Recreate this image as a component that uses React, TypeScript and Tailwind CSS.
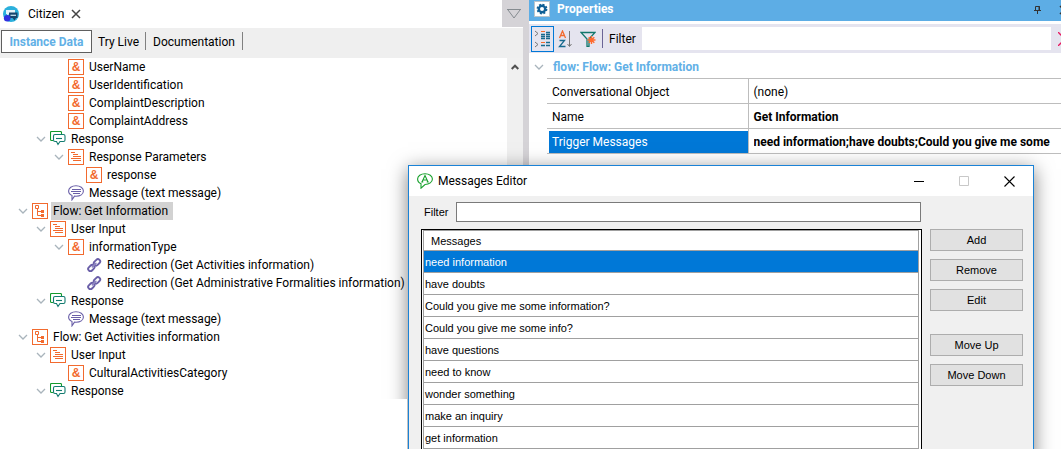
import React from "react";

type IconKind = "amp" | "list" | "flow" | "response" | "message" | "link";

interface TreeRow {
  level: number;
  icon: IconKind;
  label: string;
  open?: boolean;
  selected?: boolean;
}

const rows: TreeRow[] = [
  { level: 2, icon: "amp", label: "UserName" },
  { level: 2, icon: "amp", label: "UserIdentification" },
  { level: 2, icon: "amp", label: "ComplaintDescription" },
  { level: 2, icon: "amp", label: "ComplaintAddress" },
  { level: 1, icon: "response", label: "Response", open: true },
  { level: 2, icon: "list", label: "Response Parameters", open: true },
  { level: 3, icon: "amp", label: "response" },
  { level: 2, icon: "message", label: "Message (text message)" },
  { level: 0, icon: "flow", label: "Flow: Get Information", open: true, selected: true },
  { level: 1, icon: "list", label: "User Input", open: true },
  { level: 2, icon: "amp", label: "informationType", open: true },
  { level: 3, icon: "link", label: "Redirection (Get Activities information)" },
  { level: 3, icon: "link", label: "Redirection (Get Administrative Formalities information)" },
  { level: 1, icon: "response", label: "Response", open: true },
  { level: 2, icon: "message", label: "Message (text message)" },
  { level: 0, icon: "flow", label: "Flow: Get Activities information", open: true },
  { level: 1, icon: "list", label: "User Input", open: true },
  { level: 2, icon: "amp", label: "CulturalActivitiesCategory" },
  { level: 1, icon: "response", label: "Response", open: true },
];

const indents = ["pl-[18px]", "pl-[36px]", "pl-[54px]", "pl-[72px]"];

const messages = [
  "need information",
  "have doubts",
  "Could you give me some information?",
  "Could you give me some info?",
  "have questions",
  "need to know",
  "wonder something",
  "make an inquiry",
  "get information",
];

function Chevron() {
  return (
    <svg className="h-[10px] w-[10px]" viewBox="0 0 10 10" fill="none" stroke="#a9b4bc" strokeWidth="1.3">
      <path d="M1 3l4 4 4-4" />
    </svg>
  );
}

function TreeIcon({ kind }: { kind: IconKind }) {
  const cls = "h-4 w-4 shrink-0";
  if (kind === "amp")
    return (
      <span className="flex h-4 w-4 shrink-0 items-center justify-center border border-[#f26a2e] bg-white font-['Liberation_Sans',sans-serif] text-[12px] leading-none font-bold text-[#f26a2e]">
        &amp;
      </span>
    );
  if (kind === "list")
    return (
      <svg className={cls} viewBox="0 0 16 16" fill="none" stroke="#f26a2e">
        <rect x=".5" y=".5" width="15" height="15" fill="#fff" />
        <path d="M3 3.5h4M5 5.5h5M5 7.5h8M3 9.5h10M5 11.5h8" />
      </svg>
    );
  if (kind === "flow")
    return (
      <svg className={cls} viewBox="0 0 16 16" fill="none" stroke="#f26a2e">
        <rect x=".5" y=".5" width="15" height="15" fill="#fff" />
        <path d="M3.5 2.5h3v3h-3zM5.5 5.5v7h4M5.5 8.5h4" />
        <path d="M9 7h3v3H9zM9 11h3v3H9z" fill="#f26a2e" stroke="none" />
      </svg>
    );
  if (kind === "response")
    return (
      <svg className={cls} viewBox="0 0 16 16" fill="none" strokeWidth="1.1">
        <path d="M3 9.5H1.500Q.5 9.500.5 8.500V1.500q0-1 1-1h9q1 0 1 1v2" stroke="#119a2c" />
        <path d="M5 3.500h8.500q1.500 0 1.500 1.500v4q0 1.500-1.500 1.500H10L8 13.500 6.500 10.500H5Q3.500 10.500 3.500 9V5q0-1.500 1.500-1.500z" fill="#fff" stroke="#137c70" />
        <path d="M6 7.500h6" stroke="#137c70" />
      </svg>
    );
  if (kind === "message")
    return (
      <svg className={cls} viewBox="0 0 16 16" fill="none" stroke="#6a5fa8" strokeWidth="1.1">
        <path d="M8 .7c4.200 0 7.400 2.200 7.400 5.300S12.200 11.200 8 11.200l-1.500-.1L4 14.800v-4.300C1.800 9.600.6 8 .6 6 .6 2.900 3.800.7 8 .7z" />
        <path d="M4 4.500h9M3 6.500h10M5 8.500h7" />
      </svg>
    );
  return (
    <svg className={cls} viewBox="0 0 16 16" fill="none" strokeLinecap="round">
      <g transform="rotate(-45 8 8)" stroke="#6a5fa8" strokeWidth="1.900">
        <rect x="0.500" y="6" width="7" height="4.500" rx="2.200" />
        <rect x="8.500" y="6" width="7" height="4.500" rx="2.200" />
        <path d="M5.500 8.200h5" stroke="#8d85c0" strokeWidth="1.600" />
      </g>
    </svg>
  );
}

function LeftPanel() {
  return (
    <section className="flex min-w-0 flex-[523] flex-col bg-white">
      <header className="flex h-[28px] items-start justify-between">
        <div className="flex h-[27px] items-center pl-[3px]">
          <svg className="h-4 w-4" viewBox="0 0 16 16">
            <circle cx="8" cy="8" r="8" fill="#2bb0dc" />
            <path d="M3 4h9v4H6l-1.500 2L4 8H3z" fill="#e6f4fa" />
            <path d="M6 6.500h8.500V12H13l-1.500 2.500L9.500 12H6z" fill="#17476f" />
            <path d="M7.500 9.300h5.500" stroke="#cfe9f5" strokeWidth="1.200" />
            <circle cx="4.200" cy="12.300" r="3.300" fill="#3030e0" />
          </svg>
          <span className="ml-[9px]">Citizen</span>
          <button aria-label="Close tab" className="ml-[7px]">
            <svg className="h-[10px] w-[10px]" viewBox="0 0 10 10" stroke="#444" strokeWidth="1.500">
              <path d="M1 1l8 8M9 1L1 9" />
            </svg>
          </button>
        </div>
        <button aria-label="Tab list" className="flex h-[27px] w-[21px] items-center justify-center bg-[#d5d3d7] pl-[3px]">
          <svg className="h-[12px] w-[14px]" viewBox="0 0 14 12" fill="none" stroke="#858b90">
            <path d="M0 1.500h14M1 2l6 8 6-8" />
          </svg>
        </button>
      </header>
      <nav className="flex h-[30px] items-start bg-[#efefef] pt-[2px] pl-px">
        <button className="h-[23px] w-[91px] border border-[#5f5f5f] bg-white font-bold text-[#62b0e6]">Instance Data</button>
        <button className="h-[23px] px-[6px]">Try Live</button>
        <span className="mt-[2px] h-[18px] w-px bg-[#808080]" />
        <button className="h-[23px] px-[7px]">Documentation</button>
        <span className="mt-[2px] h-[18px] w-px bg-[#808080]" />
      </nav>
      <div className="flex min-h-0 flex-1">
        <ul role="tree" className="min-w-0 flex-1 overflow-hidden">
          {rows.map((r, i) => (
            <li
              key={i}
              role="treeitem"
              aria-selected={!!r.selected}
              className={`flex h-[18px] items-center whitespace-nowrap ${indents[r.level]}`}
            >
              <span className="w-[14px] shrink-0">{r.open && <Chevron />}</span>
              <TreeIcon kind={r.icon} />
              <span className={`ml-[3px] h-[18px] pr-[5px] pl-[2px] leading-[18px] ${r.selected ? "bg-[#d2d2d2]" : ""}`}>
                {r.label}
              </span>
            </li>
          ))}
        </ul>
        <div className="flex w-[16px] justify-center bg-[#f0f0f0] pt-[5px]">
          <svg className="h-[8px] w-[8px]" viewBox="0 0 8 8" fill="none" stroke="#505050" strokeWidth="2">
            <path d="M.7 6L4 2.700 7.300 6" />
          </svg>
        </div>
      </div>
    </section>
  );
}

function RightPanel() {
  return (
    <section className="flex min-w-0 flex-[532] flex-col bg-white">
      <header className="flex h-[21px] items-start bg-[#5dade5] pl-[5px]">
        <svg className="mt-px h-4 w-4" viewBox="0 0 16 16">
          <rect x=".5" y=".5" width="15" height="15" fill="#fff" stroke="#b9c4cc" />
          <circle cx="8" cy="8" r="3.200" fill="none" stroke="#0f5f96" strokeWidth="2.400" />
          <circle cx="8" cy="8" r="4.600" fill="none" stroke="#0f5f96" strokeWidth="1.600" strokeDasharray="2 1.610" />
        </svg>
        <h2 className="ml-[7px] leading-[18px] font-bold text-white">Properties</h2>
        <button aria-label="Pin" className="mt-[5px] mr-[17px] ml-auto">
          <svg className="h-[10px] w-[8px]" viewBox="0 0 8 10" fill="none" stroke="#333">
            <path d="M1.500 5V1.500h4V5M5 1v4M0 5.500h7M3.500 5.500V9" />
          </svg>
        </button>
        <button aria-label="Close panel" className="mt-[5px] w-[2px] overflow-hidden">
          <svg className="h-[10px] w-[10px]" viewBox="0 0 10 10" stroke="#333" strokeWidth="1.500">
            <path d="M1 1l8 8M9 1L1 9" />
          </svg>
        </button>
      </header>
      <div className="mt-[3px] flex h-[29px] items-center bg-[#e5e4ef] pl-[2px]">
        <button aria-label="Categorized" className="flex h-[26px] w-[23px] items-center justify-center border border-[#0078d7]">
          <svg className="h-[18px] w-[17px]" viewBox="0 0 17 18" fill="none">
            <path d="M1 1l3 2.500L1 6M1 12l3 2.500L1 17" stroke="#777" />
            <path d="M7 1.500h4M7 12.500h4" stroke="#f26a2e" />
            <path d="M12 2.500h4M7 4.500h4M12 4.500h4M7 6.500h4M12 6.500h4M7 8.500h4M12 8.500h4M12 12.500h4M7 15.500h4M12 15.500h4" stroke="#176a8e" strokeWidth="1.300" />
          </svg>
        </button>
        <button aria-label="Sort alphabetically" className="ml-[4px]">
          <svg className="h-[18px] w-[15px]" viewBox="0 0 15 18" fill="none">
            <path d="M1.500 8l3-7 3 7M2.500 5.500h4" stroke="#f26a2e" strokeWidth="1.300" />
            <path d="M1.500 10.500h5L1.500 16.500h6" stroke="#176a8e" strokeWidth="1.300" />
            <path d="M11.500 1v15M9.500 14l2 2.500 2-2.500" stroke="#777" />
          </svg>
        </button>
        <button aria-label="Clear filters" className="ml-[7px]">
          <svg className="h-4 w-4" viewBox="0 0 16 16" fill="none">
            <path d="M1 1.500h14L9 8v7.500H7V8z" stroke="#12776c" strokeWidth="1.300" />
            <path d="M11.500 5v8M7.500 9h8M8.700 6.200l5.600 5.600M14.300 6.200l-5.600 5.600" stroke="#ff6a2e" strokeWidth="1.400" />
          </svg>
        </button>
        <span className="ml-[6px] h-[19px] w-px bg-[#6a6496]" />
        <label htmlFor="prop-filter" className="w-[39px] pl-[6px]">Filter</label>
        <input id="prop-filter" className="h-[23px] min-w-0 flex-1 bg-white px-1 outline-none" />
        <button aria-label="Clear" className="ml-[7px] w-[3px] overflow-hidden">
          <svg className="h-[14px] w-[14px]" viewBox="0 0 14 14" stroke="#e8185f" strokeWidth="1.300">
            <path d="M0 0l14 14M14 0L0 14" />
          </svg>
        </button>
      </div>
      <div className="flex h-[25px] items-center gap-[9px] pt-[2px] pl-[5px]">
        <Chevron />
        <h3 className="font-bold text-[#62b0e6]">flow: Flow: Get Information</h3>
      </div>
      <div className="pl-[18px]">
        <table className="w-full table-fixed border-collapse text-left">
          <tbody>
            <tr className="h-[25px] border-y border-[#bdbdbd]">
              <th className="w-[201px] border-r border-[#bdbdbd] pt-px pl-[5px] font-normal">Conversational Object</th>
              <td className="pt-px pl-[5px]">(none)</td>
            </tr>
            <tr className="h-[25px] border-y border-[#bdbdbd]">
              <th className="border-r border-[#bdbdbd] pt-px pl-[5px] font-normal">Name</th>
              <td className="pt-px pl-[5px] font-bold">Get Information</td>
            </tr>
            <tr className="h-[25px] border-y border-[#bdbdbd]">
              <th className="border-r border-[#bdbdbd] pt-px pl-[2px] font-normal">
                <div className="h-[22px] bg-[#0078d7] pl-[3px] leading-[22px] text-white">Trigger Messages</div>
              </th>
              <td className="pt-px pl-[5px] font-bold">
                <div className="overflow-hidden whitespace-nowrap">need information;have doubts;Could you give me some</div>
              </td>
            </tr>
          </tbody>
        </table>
      </div>
    </section>
  );
}

function EditorButton({ children }: { children: React.ReactNode }) {
  return <button className="h-[22px] w-[93px] border border-[#adadad] bg-[#e1e1e1]">{children}</button>;
}

function MessagesEditor() {
  return (
    <div
      role="dialog"
      aria-label="Messages Editor"
      className="absolute top-[165px] right-[27px] left-[408px] border border-[#1a82d6] bg-[#f0f0f0] shadow-[0_4px_18px_rgba(0,0,0,0.5)]"
    >
      <header className="flex h-[30px] items-center bg-white pr-[18px] pl-[8px]">
        <svg className="h-4 w-4" viewBox="0 0 16 16" fill="none" stroke="#17a02c" strokeWidth="1.100">
          <path d="M8 .7c4.200 0 7.400 2.200 7.400 5.300S12.200 11.500 8 11.500L4 15.200v-4.500C1.800 9.800.6 8.200.6 6 .6 2.900 3.800.7 8 .7z" />
          <path d="M5 9l3-6.500L11 9M6 7h4M4.300 9h2M9.700 9h2" />
        </svg>
        <h2 className="ml-[5px]">Messages Editor</h2>
        <div className="ml-auto flex items-center gap-[35px]">
          <button aria-label="Minimize">
            <svg className="h-[10px] w-[10px]" viewBox="0 0 10 10" stroke="#000">
              <path d="M0 5.500h10" />
            </svg>
          </button>
          <button aria-label="Maximize" disabled>
            <svg className="h-[10px] w-[10px]" viewBox="0 0 10 10" fill="none" stroke="#c8c8c8">
              <path d="M.5.5h9v9h-9z" />
            </svg>
          </button>
          <button aria-label="Close">
            <svg className="h-[11px] w-[11px]" viewBox="0 0 11 11" stroke="#000" strokeWidth="1.100">
              <path d="M.5.5l10 10M10.500.5l-10 10" />
            </svg>
          </button>
        </div>
      </header>
      <div className="flex items-start gap-[8px] pt-[6px] pr-[10px] pb-3 pl-[12px] font-['Liberation_Sans',Arial,sans-serif] text-[11px]">
        <div className="min-w-0 flex-1">
          <div className="flex items-center pr-px pl-[3px]">
            <label htmlFor="msg-filter" className="w-[32px]">Filter</label>
            <input id="msg-filter" className="h-[20px] min-w-0 flex-1 border border-[#7a7a7a] bg-white px-1 outline-none" />
          </div>
          <div className="mt-[7px] border border-black bg-white pr-[2px] pl-px">
            <table className="w-full border-collapse text-left">
              <thead>
                <tr className="h-[20px]">
                  <th className="border border-[#a0a0a0] pl-[7px] font-normal">Messages</th>
                </tr>
              </thead>
              <tbody>
                {messages.map((m, i) => (
                  <tr key={m} className={`h-[22px] ${i === 0 ? "bg-[#0078d7] text-white" : ""}`}>
                    <td className="border border-[#a0a0a0] pl-px">{m}</td>
                  </tr>
                ))}
              </tbody>
            </table>
          </div>
        </div>
        <div className="flex flex-col gap-[8px] pt-[27px]">
          <EditorButton>Add</EditorButton>
          <EditorButton>Remove</EditorButton>
          <EditorButton>Edit</EditorButton>
          <div className="h-[7px]" />
          <EditorButton>Move Up</EditorButton>
          <EditorButton>Move Down</EditorButton>
        </div>
      </div>
    </div>
  );
}

export default function App() {
  return (
    <main className="relative flex h-screen overflow-hidden bg-white font-['Roboto',sans-serif] text-[12px] leading-4 text-black">
      <LeftPanel />
      <div className="w-[6px] shrink-0 bg-[#d5d3d7]" />
      <RightPanel />
      <MessagesEditor />
      <div className="absolute bottom-0 left-0 h-[50px] w-[407px] bg-white" />
    </main>
  );
}
